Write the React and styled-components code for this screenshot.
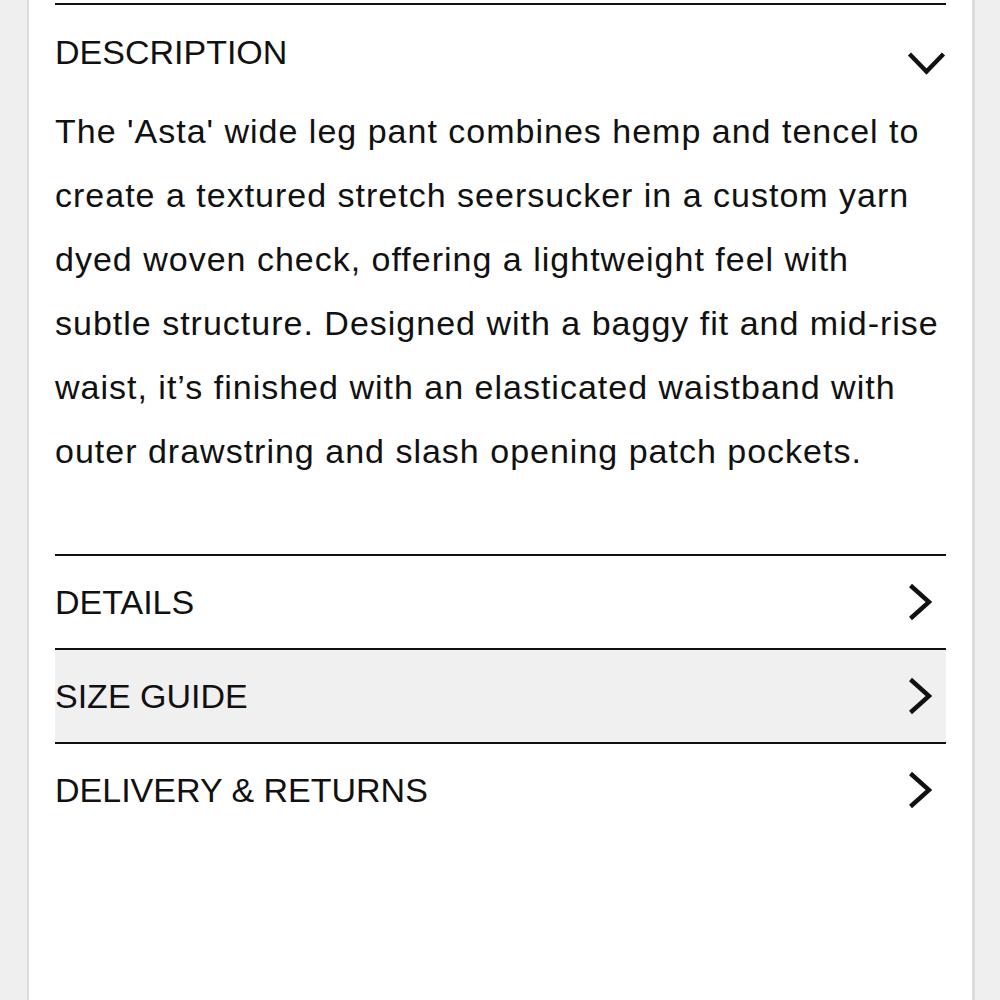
import React from "react";
import styled, { createGlobalStyle } from "styled-components";

const Global = createGlobalStyle`
  html, body { margin: 0; padding: 0; background: #efefef; }
  body { font-family: "Liberation Sans", Arial, Helvetica, sans-serif; color: #111; }
`;

const Page = styled.div`
  display: flex;
  justify-content: center;
  min-height: 1000px;
  padding: 0 25px 0 27px;
`;

const Panel = styled.main`
  flex: 1;
  background: #fff;
  border-left: 2px solid #dcdcdc;
  border-right: 3px solid #dcdcdc;
  padding: 3px 26px 0 26px;
  min-height: 1000px;
  box-sizing: border-box;
`;

const Section = styled.section`
  border-top: 2px solid #111;
  background: ${(p) => (p.$active ? "#f0f0f0" : "transparent")};
`;

const Header = styled.div`
  display: flex;
  align-items: center;
  justify-content: space-between;
  height: ${(p) => p.$h || 92}px;
`;

const Title = styled.h2`
  margin: 0;
  font-size: 34px;
  font-weight: 400;
  letter-spacing: 0;
`;

const Body = styled.p`
  margin: 0 0 71px 0;
  font-size: 34px;
  letter-spacing: 1px;
  line-height: 64px;
  white-space: nowrap;
`;

const IconRight = styled.svg`
  width: 24px;
  height: 38px;
  margin-right: 14px;
`;

const IconDown = styled.svg`
  width: 39px;
  height: 24px;
  margin-top: 22px;
`;

const Chevron = () => (
  <IconRight viewBox="0 0 24 38">
    <polyline points="2.5,2.5 21,19 2.5,35.5" fill="none" stroke="#111" strokeWidth="4.4" />
  </IconRight>
);

const ChevronDown = () => (
  <IconDown viewBox="0 0 39 24">
    <polyline points="2.5,3 19.5,20.5 36.5,3" fill="none" stroke="#111" strokeWidth="4.4" />
  </IconDown>
);

const lines = [
  "The 'Asta' wide leg pant combines hemp and tencel to",
  "create a textured stretch seersucker in a custom yarn",
  "dyed woven check, offering a lightweight feel with",
  "subtle structure. Designed with a baggy fit and mid-rise",
  "waist, it’s finished with an elasticated waistband with",
  "outer drawstring and slash opening patch pockets.",
];

const rows = ["DETAILS", "SIZE GUIDE", "DELIVERY & RETURNS"];

export default function App() {
  return (
    <>
      <Global />
      <Page>
        <Panel>
          <Section>
            <Header $h={94}>
              <Title>DESCRIPTION</Title>
              <ChevronDown />
            </Header>
            <Body>
              {lines.map((l, i) => (
                <React.Fragment key={i}>
                  {l}
                  {i < lines.length - 1 && <br />}
                </React.Fragment>
              ))}
            </Body>
          </Section>
          {rows.map((r) => (
            <Section key={r} $active={r === "SIZE GUIDE"}>
              <Header>
                <Title>{r}</Title>
                <Chevron />
              </Header>
            </Section>
          ))}
        </Panel>
      </Page>
    </>
  );
}
